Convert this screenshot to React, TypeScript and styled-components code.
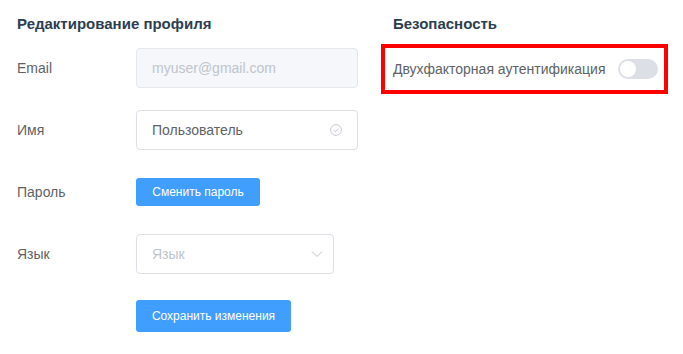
import styled, { createGlobalStyle } from "styled-components";

const GlobalStyle = createGlobalStyle`
  body {
    margin: 0;
    background: #ffffff;
    font-family: "Liberation Sans", Arial, sans-serif;
  }
`;

const Page = styled.div`
  display: flex;
  padding: 14px 0 0 17px;
`;

const LeftColumn = styled.div`
  width: 364px;
`;

const RightColumn = styled.div`
  width: 287px;
`;

const Title = styled.h3<{ $indent?: number; $gap: number }>`
  margin: 0 0 ${(p) => p.$gap}px;
  padding-left: ${(p) => p.$indent || 0}px;
  height: 20px;
  line-height: 20px;
  font-size: 15px;
  font-weight: bold;
  color: #2c3e50;
`;

const Row = styled.div`
  display: flex;
  align-items: center;
  height: 40px;
  margin-bottom: 22px;
`;

const Label = styled.div`
  width: 119px;
  font-size: 14px;
  color: #606266;
`;

const Field = styled.div<{ $width: number; $disabled?: boolean; $select?: boolean }>`
  display: flex;
  align-items: center;
  box-sizing: border-box;
  width: ${(p) => p.$width}px;
  height: 40px;
  padding: 0 ${(p) => (p.$select ? 10 : 15)}px 0 15px;
  border: 1px solid ${(p) => (p.$disabled ? "#e4e7ed" : "#dcdfe6")};
  border-radius: 4px;
  background: ${(p) => (p.$disabled ? "#f5f7fa" : "#ffffff")};
  font-size: 14px;
`;

const Value = styled.span<{ $muted?: boolean }>`
  flex: 1;
  color: ${(p) => (p.$muted ? "#c0c4cc" : "#606266")};
`;

const Button = styled.button<{ $height: number; $width: number }>`
  box-sizing: border-box;
  width: ${(p) => p.$width}px;
  height: ${(p) => p.$height}px;
  padding: 0;
  border: none;
  border-radius: 3px;
  background: #409eff;
  color: #ffffff;
  font-family: "Liberation Sans", Arial, sans-serif;
  font-size: 12px;
`;

const SecurityBox = styled.div`
  display: flex;
  align-items: center;
  justify-content: space-between;
  box-sizing: border-box;
  height: 50px;
  padding: 0 6px 0 8px;
  border: 4px solid #ff0000;
`;

const SecurityText = styled.span`
  font-size: 14px;
  color: #606266;
`;

const Switch = styled.span`
  position: relative;
  display: inline-block;
  width: 40px;
  height: 20px;
  border-radius: 10px;
  background: #dcdfe6;

  &::after {
    content: "";
    position: absolute;
    top: 2px;
    left: 2px;
    width: 16px;
    height: 16px;
    border-radius: 50%;
    background: #ffffff;
  }
`;

const CheckIcon = () => (
  <svg width="12" height="12" viewBox="0 0 12 12" fill="none">
    <circle cx="6" cy="6" r="5.4" stroke="#c0c4cc" strokeWidth="0.9" />
    <path d="M3.5 6.1 L5.3 7.8 L8.6 4.5" stroke="#c0c4cc" strokeWidth="0.9" />
  </svg>
);

const ChevronIcon = () => (
  <svg width="12" height="8" viewBox="0 0 12 8" fill="none">
    <path d="M1 1.5 L6 6.5 L11 1.5" stroke="#c0c4cc" strokeWidth="1" />
  </svg>
);

export default function App() {
  return (
    <>
      <GlobalStyle />
      <Page>
        <LeftColumn>
          <Title $gap={14}>Редактирование профиля</Title>
          <Row>
            <Label>Email</Label>
            <Field $width={222} $disabled>
              <Value $muted>myuser@gmail.com</Value>
            </Field>
          </Row>
          <Row>
            <Label>Имя</Label>
            <Field $width={222}>
              <Value>Пользователь</Value>
              <CheckIcon />
            </Field>
          </Row>
          <Row>
            <Label>Пароль</Label>
            <Button $width={124} $height={28}>
              Сменить пароль
            </Button>
          </Row>
          <Row>
            <Label>Язык</Label>
            <Field $width={198} $select>
              <Value $muted>Язык</Value>
              <ChevronIcon />
            </Field>
          </Row>
          <Row>
            <Label />
            <Button $width={155} $height={32}>
              Сохранить изменения
            </Button>
          </Row>
        </LeftColumn>
        <RightColumn>
          <Title $indent={12} $gap={10}>
            Безопасность
          </Title>
          <SecurityBox>
            <SecurityText>Двухфакторная аутентификация</SecurityText>
            <Switch />
          </SecurityBox>
        </RightColumn>
      </Page>
    </>
  );
}
